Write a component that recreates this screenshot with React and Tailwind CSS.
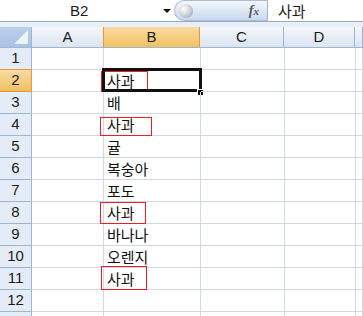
const cols = [
  { name: 'A', w: 'w-[72px]' },
  { name: 'B', w: 'w-[97px]' },
  { name: 'C', w: 'w-[84px]' },
  { name: 'D', w: 'w-[71px]' },
  { name: '', w: 'flex-1' },
];

const data = {
  2: '사과',
  3: '배',
  4: '사과',
  5: '귤',
  6: '복숭아',
  7: '포도',
  8: '사과',
  9: '바나나',
  10: '오렌지',
  11: '사과',
};

// red marks around the duplicates (position within the B cell)
const marks = {
  2: 'left-[-3px] top-[1px] w-[47px] h-[21px]',
  4: 'left-[-4px] top-[3px] w-[52px] h-[19px]',
  8: 'left-[-4px] top-[0px] w-[46px] h-[22px]',
  11: 'left-[-3px] top-[-2px] w-[46px] h-[24px]',
};

const rows = Array.from({ length: 13 }, (_, i) => i + 1);

const App = () => {
  return (
    <div className="w-[363px] h-[316px] overflow-hidden bg-white font-['Liberation_Sans','Noto_Sans_CJK_KR',sans-serif] text-[15px] text-[#1b1b1b]">
      {/* formula bar */}
      <div className="flex h-[22px] border-b border-[#9aabc4] bg-white">
        <div className="relative flex w-[174px] items-center">
          <span className="ml-[70px] leading-none">B2</span>
          <span className="absolute left-[163px] top-[9px] h-0 w-0 border-x-[4px] border-t-[4px] border-x-transparent border-t-[#111]" />
        </div>
        <div className="relative flex h-[21px] w-[94px] items-center rounded-l-full border border-[#a8bcd8] border-r-[#9cb0cc] bg-gradient-to-b from-[#f4f8fd] via-[#dde8f6] to-[#c9d9ef]">
          <span className="ml-[4px] h-[14px] w-[14px] rounded-full bg-[radial-gradient(circle_at_35%_35%,#ffffff,#c8ccd2_55%,#8c929c)]" />
          <span className="ml-auto mr-[8px] font-['Liberation_Serif',serif] text-[14px] italic font-bold text-[#5a5a5a]">
            f<span className="text-[11px]">x</span>
          </span>
        </div>
        <div className="flex items-center pl-[10px] font-['Noto_Sans_CJK_KR',sans-serif] leading-none">사과</div>
      </div>
      <div className="h-[5px] bg-[#e9eff8]" />

      {/* column headers */}
      <div className="flex h-[21px] border-b border-[#9eb6ce]">
        <div className="relative w-[32px] border-r border-[#9eb6ce] bg-gradient-to-b from-[#bcd0ec] to-[#a9c2e6]">
          <span className="absolute bottom-[3px] right-[3px] h-0 w-0 border-l-[14px] border-b-[14px] border-l-transparent border-b-[#eef3fa]" />
        </div>
        {cols.map((c, i) => (
          <div
            key={i}
            className={`${c.w} flex items-center justify-center border-r ${
              c.name === 'B'
                ? 'ml-[-1px] border-l border-[#f29436] bg-gradient-to-b from-[#f9dba2] to-[#f1c15f]'
                : 'border-[#9eb6ce] bg-gradient-to-b from-[#f4f7fc] to-[#dbe4f1]'
            }`}
          >
            {c.name}
          </div>
        ))}
      </div>

      {/* rows */}
      {rows.map((r) => (
        <div key={r} className="flex h-[22px]">
          <div
            className={`flex w-[32px] items-center justify-center border-r border-b ${
              r === 2
                ? 'mt-[-1px] h-[23px] border-t border-[#f29436] bg-gradient-to-b from-[#f9dba2] to-[#f1c15f]'
                : 'border-[#9eb6ce] bg-[#e4ecf7]'
            }`}
          >
            {r < 13 ? r : ''}
          </div>
          {cols.map((c, i) => (
            <div key={i} className={`${c.w} relative border-r border-b border-[#d0d7e5]`}>
              {c.name === 'B' && data[r] && (
                <span className="absolute left-[3px] top-[1px] font-['Noto_Sans_CJK_KR',sans-serif] text-[15px] leading-[20px] text-[#111]">
                  {data[r]}
                </span>
              )}
              {c.name === 'B' && marks[r] && (
                <span className={`absolute ${marks[r]} border border-[#ee1c24]`} />
              )}
              {c.name === 'B' && r === 2 && (
                <>
                  <span className="absolute left-[-2px] top-[-2px] h-[24px] w-[100px] border-[3px] border-[#111]" />
                  <span className="absolute right-[-4px] bottom-[-5px] h-[7px] w-[7px] border border-white bg-[#111]" />
                </>
              )}
            </div>
          ))}
        </div>
      ))}
    </div>
  );
};

export default App;
